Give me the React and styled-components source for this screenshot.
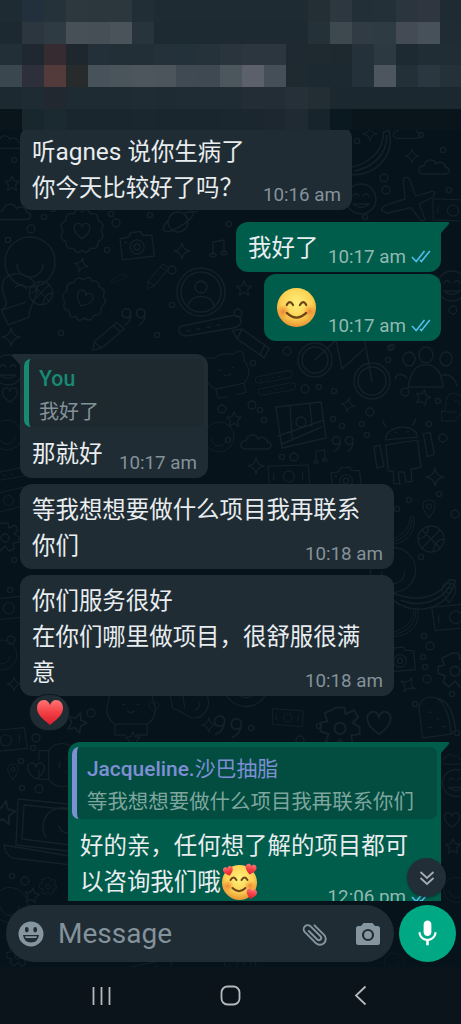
import React from 'react'
import styled, { createGlobalStyle } from 'styled-components';
import { MdMic } from 'react-icons/md';

const GlobalStyle = createGlobalStyle`
  * {
    box-sizing: border-box;
  }
  body {
    margin: 0;
    background: #07131a;
    font-family: Roboto, "Noto Sans CJK SC", sans-serif;
  }
`;
const Screen = styled.div`
  position: relative;
  display: flex;
  flex-direction: column;
  width: 461px;
  height: 1024px;
  overflow: hidden;
  background: #07131a;
`;
const Wallpaper = styled.svg`
  position: absolute;
  left: 0;
  top: 0;
  fill: none;
  stroke: #132128;
  stroke-width: 1.4;
  stroke-linecap: round;
  stroke-linejoin: round;
`;
const Header = styled.div`
  position: relative;
  flex: none;
  display: grid;
  grid-template-columns: repeat(21, 22px);
  grid-template-rows: 22px 22px 21px 22px 22px 21px;
  height: 130px;
`;
const Block = styled.div`
  background: ${(props) => props.$color};
`;
const Chat = styled.div`
  position: relative;
  flex: none;
  display: flex;
  flex-direction: column;
  height: 771px;
  padding: 0 20px;
  overflow: hidden;
`;
const Bubble = styled.div`
  position: relative;
  flex: none;
  display: flex;
  flex-direction: column;
  align-self: ${(props) => (props.$out ? "flex-end" : "flex-start")};
  width: ${(props) => props.$width}px;
  height: ${(props) => props.$height}px;
  margin-top: ${(props) => props.$gap}px;
  padding: ${(props) => (props.$quoted ? "5px 4px" : "7.5px 12px")};
  border-radius: 12px;
  border-top-right-radius: ${(props) => (props.$out && props.$tail ? 0 : 12)}px;
  border-top-left-radius: ${(props) => (!props.$out && props.$tail ? 0 : 12)}px;
  background: ${(props) => (props.$out ? "#005c4b" : "#1f2c34")};
  color: #e9edef;
`;
const Tail = styled.svg`
  position: absolute;
  top: 0;
  left: ${(props) => (props.$out ? "auto" : "-9px")};
  right: ${(props) => (props.$out ? "-9px" : "auto")};
  transform: ${(props) => (props.$out ? "none" : "scaleX(-1)")};
  fill: ${(props) => (props.$out ? "#005c4b" : "#1f2c34")};
`;
const Line = styled.div`
  display: flex;
  align-items: center;
  height: 36px;
  padding-left: ${(props) => (props.$quoted ? 8 : 0)}px;
  font-size: 23.45px;
  line-height: 36px;
  white-space: pre;
`;
const Latin = styled.span`
  font-size: 24.4px;
`;
const BigEmoji = styled.div`
  display: flex;
  padding-top: 5px;
`;
const Stamp = styled.div`
  position: absolute;
  right: ${(props) => (props.$out ? 10 : 11)}px;
  bottom: ${(props) => props.$bottom}px;
  display: flex;
  align-items: center;
  gap: 5px;
  font-size: 18.8px;
  line-height: 22px;
  white-space: nowrap;
  color: ${(props) => (props.$out ? "#91b9b0" : "#84929a")};
`;
const Quote = styled.div`
  display: flex;
  flex-direction: column;
  height: ${(props) => (props.$out ? 72 : 68)}px;
  margin-bottom: 9px;
  padding-left: 10px;
  border-left: 5px solid ${(props) => props.$accent};
  border-radius: 7px;
  background: ${(props) => (props.$out ? "#024d40" : "#1d282f")};
  white-space: nowrap;
`;
const QuoteName = styled.div`
  margin-top: ${(props) => (props.$out ? 6 : 4)}px;
  font-size: ${(props) => (props.$out ? 20.9 : 21.3)}px;
  font-weight: 500;
  line-height: 32px;
  color: ${(props) => props.$accent};
  & span {
    font-weight: 400;
  }
`;
const QuoteText = styled.div`
  font-size: ${(props) => (props.$out ? 20.45 : 20)}px;
  line-height: 34px;
  color: ${(props) => (props.$out ? "#7fa69e" : "#84929a")};
`;
const Reaction = styled.div`
  position: absolute;
  left: 9px;
  bottom: -35px;
  display: flex;
  align-items: center;
  justify-content: center;
  width: 41px;
  height: 37px;
  border: 1px solid #0b171e;
  border-radius: 19px;
  background: #1f2c34;
`;
const ScrollButton = styled.div`
  position: absolute;
  left: 407px;
  top: 858px;
  display: flex;
  align-items: center;
  justify-content: center;
  width: 39px;
  height: 39px;
  border-radius: 50%;
  background: #222e37;
  box-shadow: 0 1px 2px rgba(0, 0, 0, 0.35);
`;
const Composer = styled.div`
  position: relative;
  flex: none;
  display: flex;
  gap: 5px;
  height: 66px;
  padding: 4px 5px 0 6px;
`;
const InputBox = styled.div`
  display: flex;
  align-items: center;
  width: 388px;
  height: 57px;
  padding: 0 13px 0 12px;
  border-radius: 29px;
  background: #1f2c34;
`;
const Placeholder = styled.div`
  flex: 1;
  margin-left: 14px;
  font-size: 28px;
  color: #84929b;
`;
const CameraIcon = styled.svg`
  margin-left: 26px;
`;
const MicButton = styled.div`
  display: flex;
  align-items: center;
  justify-content: center;
  width: 57px;
  height: 57px;
  border-radius: 50%;
  background: #00a884;
  color: white;
`;
const NavBar = styled.div`
  position: relative;
  flex: none;
  display: flex;
  justify-content: space-between;
  align-items: center;
  height: 57px;
  padding: 0 94px 0 91px;
  background: #0b141b;
  & svg:nth-child(2) {
    margin-right: 5px;
  }
`;

// one row per strip of the blurred header, 21 blocks each
const blocks = [
  "1f2b33 222f3d 25323a 2c373e 2b363d 2b363d 212e35 1f2b33 1f2b33 1f2b33 1f2b33 1f2b33 1f2b33 1f2b33 232e35 2c373f 232f37 243037 2b353e 30363f 1f2b32",
  "1d2930 2c363e 2e3b42 475057 454f55 4a5359 27343b 1e2a31 1e2a31 1e2a31 1e2a31 1e2a31 1e2a31 1e2a31 253138 3e484f 303b43 2f3b42 444b54 465159 202c34",
  "232f37 1f2830 352b31 1e272d 23303a 222f37 222f37 25313a 23323a 263239 29343c 2b363e 2b363f 1e2931 1e2930 1d282f 25313a 2d3941 1e2a32 202d35 202d35",
  "3b474f 2d2f3b 533a3b 272b2c 47525a 4a545b 4e565d 4c555c 3f4a52 3e4952 4c565d 5b606b 454f58 1e2930 1c2930 1d2931 25313a 4d565f 243038 2b3740 243139",
  "1c2930 1f2b32 22282f 1f2b33 1f2b33 1f2b32 202c34 1f2b33 202c34 202c34 202c34 222d35 222d35 253038 222d34 1c2830 1b2830 1b2830 1b2830 1b2830 1b2830",
  "09151b 18262e 1b2930 1a262e 1a262e 1a262e 1b272f 1a262e 1a262e 1a262e 1b272f 1b272f 1c2730 202a33 18242c 0a1820 09151b 09151b 09151b 09151b 09151b",
];

const doodles = {
  star: "M0-8L2.4-2.6L8-2L4 2L5 8L0 5L-5 8L-4 2L-8-2L-2.4-2.6Z",
  spark: "M0-9Q1-1 9 0Q1 1 0 9Q-1 1-9 0Q-1-1 0-9Z",
  heart: "M0 8C-12 0-9-8-4-8Q-1-8 0-4Q1-8 4-8C9-8 12 0 0 8Z",
  cloud: "M-10 6C-18 6-16-3-10-2C-9-9 0-10 2-4C6-8 12-4 11-1C17 0 16 6 10 6Z",
  camera: "M-16-9L-7-10L-5-14L5-14L7-10L16-9L16 12L-16 12ZM-7 1A7 7 0 1 0 7 1A7 7 0 1 0-7 1M-3 1A3 3 0 1 0 3 1A3 3 0 1 0-3 1M-12-5H-10",
  person: "M-24 0A24 24 0 1 0 24 0A24 24 0 1 0-24 0M-20 0A20 20 0 1 0 20 0A20 20 0 1 0-20 0M-6-5A6 6 0 1 0 6-5A6 6 0 1 0-6-5M-13 15C-13 1 13 1 13 15",
  flower: "M0-20Q5-26 9-18Q17-20 17-11Q25-8 20 0Q25 8 17 11Q17 20 9 18Q5 26 0 20Q-5 26-9 18Q-17 20-17 11Q-25 8-20 0Q-25-8-17-11Q-17-20-9-18Q-5-26 0-20ZM0 8C-12 0-9-8-4-8Q-1-8 0-4Q1-8 4-8C9-8 12 0 0 8Z",
  planet: "M-10 0A10 10 0 1 0 10 0A10 10 0 1 0-10 0M-9-4C-22 4-16 10 0 5C18 0 22-8 9-7",
  ball: "M-13 0A13 13 0 1 0 13 0A13 13 0 1 0-13 0M-9-9L9 9M9-9L-9 9M-13 0Q-4 0-2-13M13 0Q4 0 2 13",
  pin: "M0 12C-12-2-8-10 0-10C8-10 12-2 0 12ZM-3-2A3 3 0 1 0 3-2A3 3 0 1 0-3-2",
  plane: "M-28 12Q-28 7-16 4L-3 0L-5-20Q-2-26 2-20L8-3L25-8Q31-8 26-2L12 5L18 22L14 23L3 9L-22 15Z",
  banana: "M-20 15C0 12 14 0 14-18L19-20C25 5 5 24-20 20ZM-12 17C5 14 17 2 17-15",
  note: "M-5 6V-7L6-9V4M-8 6A3 2 0 1 0-2 6A3 2 0 1 0-8 6M3 4A3 2 0 1 0 9 4A3 2 0 1 0 3 4",
  quotes: "M-4-1A4 4 0 1 1-4-4Q-3 5-9 8M9-1A4 4 0 1 1 9-4Q10 5 4 8",
  pencil: "M-20 9L-16 0L14-14L20-5L-10 9ZM-16 0L-10 9M9-12L15-3",
  tube: "M-30 8Q-33 1-28 0L20-10Q31-12 31-5Q31 1 23 2L-24 10ZM-23 5H-20M-13 3H-10M-3 1H0M7-1H10",
  face: "M-15 0A15 15 0 1 0 15 0A15 15 0 1 0-15 0M-8-3Q-5-8-2-3M2-3Q5-8 8-3M-8 5Q0 12 8 5Z",
  bag: "M-24-17L21-22L26 14L-18 24ZM-22 12L24-4M-18 20L22 3M-10-18L-8 14M10-20L12 2M-4-2A5 5 0 1 0 6-2A5 5 0 1 0-4-2",
  robot: "M-16-9C-16-24 16-25 16-10ZM-15-22L-18-28M12-22L15-28M-6-16H-5M6-16H7M-16-4L16-7L18 20L8 22V34L2 34L1 24L-5 24L-4 36L-10 35L-10 23L-15 22ZM-28-3L-22-4L-19 17L-26 19ZM22-13L29-14L32 8L25 10Z",
  glove: "M-14-24C0-32 18-22 16-6C14 4 6 6 4 18L-18 22L-22 6C-8 0-24-8-14-24ZM-20 6L3 3M-4-14Q4-18 6-10",
  cat: "M-24-10Q-30-28-12-20Q0-26 12-20Q28-28 24-10Q32 8 18 18H-18Q-32 8-24-10ZM-9-4H-7M7-4H9M-4 3Q0 7 4 3M-18 18V30H-6M18 18V30H6",
  bike: "M-34 7A17 17 0 1 0 0 7A17 17 0 1 0-34 7M-30 7A13 13 0 1 0-4 7A13 13 0 1 0-30 7M22 28A18 18 0 1 0 58 28A18 18 0 1 0 22 28M26 28A14 14 0 1 0 54 28A14 14 0 1 0 26 28M-17 7L4-13L10 16L32-4M4-13L32-16L40 28",
  crowd: "M-17 12Q-13-12 2-10Q16-10 18 12ZM-6-20A7 8 0 1 0 8-20A7 8 0 1 0-6-20M-22-16A6 7 0 1 0-10-16A6 7 0 1 0-22-16M15-16A6 7 0 1 0 27-16A6 7 0 1 0 15-16M-18 3Q-27-5-30 4M18 0Q28-2 32 11",
  laptop: "M-32-30L38-23L35 24L-34 16ZM-26-24L32-18L29 17L-28 10ZM-46 16L50 32Q48 38 40 38L-38 29Q-45 25-46 16M-4 8A19 19 0 1 1 31-2M9-3Q11 4 18 4",
  ice: "M-12 22L-16-10Q-12-24 2-20Q15-14 18 18ZM2-20Q19-18 23 14L18 18M-5-5H-3M3 2H5M-5 11H-3M9 10H11",
  money: "M-26-13L24-18L28 8L-22 13ZM-6-2A7 7 0 1 0 8-2A7 7 0 1 0-6-2M-18-4V4M18-9V0",
  ring: "M-25 0A25 25 0 1 0 25 0A25 25 0 1 0-25 0M-13 2A13 13 0 1 0 13 2",
  gear: "M-3-14H3L4-9L10-12L13-7L9-3L14 0V5L8 6L9 12L4 14L0 9L-5 14L-10 10L-8 5L-14 3V-3L-9-4L-11-10L-6-12ZM-4 1A4 4 0 1 0 4 1A4 4 0 1 0-4 1",
};

// [shape, x, y, rotation, scale]
const placed = [
  ["ring", 30, 262, 0, 1], ["flower", 82, 231, 0, 0.95], ["camera", 137, 246, -7, 1], ["planet", 178, 222, -14, 1],
  ["spark", 182, 251, 0, 0.9], ["spark", 81, 265, 15, 0.8], ["person", 201, 292, 0, 1], ["flower", 84, 299, 25, 0.95],
  ["glove", 22, 300, -10, 1], ["ball", 41, 293, 0, 0.9], ["pencil", 108, 338, -15, 0.9], ["tube", 210, 326, 0, 1],
  ["pencil", 158, 277, -25, 0.7], ["pencil", 119, 279, 0, 0.4],
  ["quotes", 135, 316, 0, 1.1], ["star", 244, 288, 0, 0.9], ["spark", 11, 337, 0, 1], ["cloud", 14, 213, 0, 1.1],
  ["note", 218, 249, 0, 1], ["banana", 368, 152, 0, 1.1], ["spark", 370, 134, 0, 0.8], ["spark", 412, 156, 0, 0.8],
  ["cloud", 434, 168, 0, 1], ["face", 361, 199, 0, 1], ["plane", 408, 199, 0, 0.95], ["cloud", 407, 133, 0, 0.9],
  ["money", 452, 212, 8, 0.8], ["face", 452, 286, 0, 1], ["pencil", 250, 343, 60, 1], ["cat", 227, 372, -12, 0.8],
  ["tube", 274, 377, 0, 0.6], ["tube", 277, 389, 0, 0.6], ["bike", 332, 353, 0, 1], ["crowd", 425, 375, 0, 1],
  ["star", 423, 397, 15, 0.9], ["bag", 300, 424, 0, 1], ["spark", 348, 405, 10, 0.8], ["quotes", 344, 443, 0, 1],
  ["robot", 402, 448, -3, 1], ["star", 234, 419, 0, 0.9], ["cloud", 256, 443, 0, 1], ["spark", 256, 466, 0, 0.9],
  ["note", 320, 457, 0, 0.8], ["camera", 346, 480, -5, 0.9], ["money", 288, 478, 4, 0.8], ["spark", 435, 477, 0, 1],
  ["glove", 455, 410, 10, 0.6], ["ring", 219, 437, 0, 0.6], ["face", 8, 370, 0, 1], ["ring", 7, 435, 0, 0.6],
  ["heart", 10, 395, 0, 0.9], ["tube", 6, 475, 0, 0.7], ["money", 8, 502, -8, 0.7], ["gear", 5, 537, 0, 1],
  ["pin", 429, 508, 0, 0.8], ["ball", 431, 539, 0, 1], ["banana", 400, 530, 0, 0.7], ["ring", 393, 570, 0, 0.9],
  ["banana", 424, 590, 30, 1.2], ["pin", 449, 592, 0, 0.9], ["banana", 404, 622, 0, 0.7], ["money", 455, 619, 0, 0.9],
  ["camera", 400, 660, -5, 0.9], ["spark", 408, 685, 30, 0.9], ["gear", 455, 670, 0, 1.2], ["ice", 434, 717, 0, 0.95],
  ["money", 8, 610, 0, 0.8], ["ring", 2, 655, 0, 0.6], ["spark", 14, 684, 0, 0.8], ["star", 77, 722, 20, 1.2],
  ["cat", 131, 708, 0, 0.9], ["glove", 187, 705, 90, 0.8], ["heart", 154, 707, 0, 0.6], ["spark", 209, 725, 0, 0.8],
  ["quotes", 229, 726, 10, 1.3], ["ring", 246, 684, 0, 0.9], ["money", 287, 719, 10, 0.6], ["gear", 340, 727, 0, 1.4],
  ["heart", 379, 723, 0, 1.4], ["star", 133, 739, 0, 0.9], ["money", 5, 742, 0, 0.8], ["heart", 36, 771, 0, 1],
  ["pin", 13, 771, 0, 0.7], ["cat", 63, 765, 90, 0.8], ["laptop", 50, 829, 0, 1], ["star", 4, 812, 10, 1.4],
  ["ring", 10, 905, 0, 0.7], ["star", 32, 895, 10, 0.9], ["gear", 48, 886, 0, 0.6], ["face", 456, 783, 0, 0.9],
  ["cloud", 452, 760, 0, 0.7], ["heart", 452, 820, 0, 0.9], ["star", 453, 846, 0, 0.9], ["ring", 456, 890, 0, 0.5],
  ["ring", 394, 963, 0, 0.4], ["gear", 18, 955, 0, 0.8], ["tube", 150, 967, 0, 0.7], ["money", 240, 967, 0, 0.6],
  ["star", 12, 183, 0, 0.9], ["cloud", 8, 143, 0, 0.9],
];
const dots = [
  [31, 229], [44, 217], [53, 209], [116, 223], [150, 215], [107, 250], [195, 208], [229, 224], [111, 214], [172, 270],
  [61, 333], [157, 335], [238, 313], [172, 305], [357, 141], [384, 178], [421, 135], [443, 150], [386, 190], [449, 190],
  [253, 363], [287, 351], [388, 360], [392, 347], [305, 389], [319, 387], [334, 391], [252, 405], [260, 410], [264, 420],
  [222, 409], [333, 419], [342, 426], [370, 412], [362, 424], [367, 435], [405, 392], [438, 401], [429, 424], [443, 438],
  [228, 440], [282, 457], [294, 457], [397, 509], [439, 494], [455, 514], [421, 557], [424, 636], [430, 646], [423, 657],
  [425, 667], [427, 679], [415, 704], [452, 694], [91, 713], [251, 728], [319, 726], [36, 738], [33, 748],
  [21, 761], [39, 789], [22, 788], [12, 876], [25, 881], [10, 590], [14, 560], [11, 640], [457, 733], [409, 500],
  [300, 740], [14, 160], [365, 217], [453, 310], [390, 348], [8, 240],
];

const gradients = (
  <defs>
    <radialGradient id="face" cx="0.5" cy="0.38" r="0.65">
      <stop offset="0" stopColor="#fff07a" />
      <stop offset="0.6" stopColor="#fbd153" />
      <stop offset="1" stopColor="#e58c2d" />
    </radialGradient>
    <radialGradient id="blush">
      <stop offset="0" stopColor="#ee6a30" stopOpacity="0.75" />
      <stop offset="1" stopColor="#ee8a30" stopOpacity="0" />
    </radialGradient>
    <linearGradient id="heart" x1="0" y1="0" x2="0" y2="1">
      <stop offset="0" stopColor="#ff7474" />
      <stop offset="0.5" stopColor="#f23f45" />
      <stop offset="1" stopColor="#d91f2c" />
    </linearGradient>
  </defs>
)
const HEART = "M14 25C8 20 1 15 1 8C1 3 4 0 8 0C11 0 13 2 14 5C15 2 17 0 20 0C24 0 27 3 27 8C27 15 20 20 14 25Z"

const BlushEmoji = () => (
  <svg width="41" height="41" viewBox="0 0 42 42">
    {gradients}
    <circle cx="21" cy="21" r="20" fill="url(#face)" />
    <circle cx="7.5" cy="25" r="7" fill="url(#blush)" />
    <circle cx="34.5" cy="25" r="7" fill="url(#blush)" />
    <g fill="none" stroke="#6d431c" strokeWidth="2.2" strokeLinecap="round">
      <path d="M11 18.5Q14 12.5 17.5 18.5M24.5 18.5Q28 12.5 31 18.5" />
      <path d="M11 26.5Q21 36 31 26.5" />
    </g>
  </svg>
)
const HeartsEmoji = () => (
  <svg width="38" height="38" viewBox="0 0 38 38">
    <circle cx="18.5" cy="19.5" r="17.5" fill="url(#face)" />
    <circle cx="7" cy="23" r="6" fill="url(#blush)" />
    <circle cx="29" cy="23" r="6" fill="url(#blush)" />
    <g fill="none" stroke="#6d431c" strokeWidth="2" strokeLinecap="round">
      <path d="M9.5 17Q12.5 12 15.5 17M20.5 17Q23.5 12 26.5 17" />
      <path d="M11.5 25Q18 31.5 24.5 25" />
    </g>
    <g fill="url(#heart)">
      <path d={HEART} transform="translate(1 5) rotate(-15) scale(0.38)" />
      <path d={HEART} transform="translate(25 0) rotate(12) scale(0.42)" />
      <path d={HEART} transform="translate(26 25) rotate(12) scale(0.4)" />
    </g>
  </svg>
)
const Ticks = () => (
  <svg width="20" height="14" viewBox="0 0 20 14" fill="none" stroke="#53bdeb" strokeWidth="1.6">
    <path d="M1 7L5.2 11.5L13.5 1M9 10L10.4 11.5L18.8 1" />
  </svg>
)

const Message = ({ out, tail, quote, lines, time, stampBottom = 4, children, ...box }) => (
  <Bubble $out={out} $tail={tail} $quoted={!!quote} $width={box.width} $height={box.height} $gap={box.gap}>
    {tail && (
      <Tail $out={out} width="10" height="13" viewBox="0 0 10 13">
        <path d="M0 0H8Q10 .5 9 2L1 11V13H0Z" />
      </Tail>
    )}
    {quote && (
      <Quote $out={out} $accent={quote.accent}>
        <QuoteName $out={out} $accent={quote.accent}>{quote.name}</QuoteName>
        <QuoteText $out={out}>{quote.text}</QuoteText>
      </Quote>
    )}
    {lines.map((line, i) => <Line key={i} $quoted={!!quote}>{line}</Line>)}
    <Stamp $out={out} $bottom={stampBottom}>{time}{out && <Ticks />}</Stamp>
    {children}
  </Bubble>
)

const App = () => {
    return (
        <Screen>
            <GlobalStyle />
            <Wallpaper width="461" height="967" viewBox="0 0 461 967">
                {placed.map(([name, x, y, angle, scale], i) => (
                    <path key={i} d={doodles[name]} transform={`translate(${x} ${y}) rotate(${angle}) scale(${scale})`} />
                ))}
                {dots.map(([x, y], i) => <circle key={i} cx={x} cy={y} r={i % 3 === 0 ? 4 : 2.6} />)}
            </Wallpaper>
            <Header>
                {blocks.map((row, r) => row.split(" ").map((color, c) => <Block key={`${r}-${c}`} $color={`#${color}`} />))}
            </Header>
            <Chat>
                <Message
                    width={332} height={84} gap={-4}
                    lines={[<React.Fragment key="a">听<Latin>agnes </Latin>说你生病了</React.Fragment>, "你今天比较好了吗？"]}
                    time="10:16 am"
                />
                <Message out tail width={205} height={50} gap={12} lines={["我好了"]} time="10:17 am" />
                <Message out width={177} height={67} gap={2} lines={[]} time="10:17 am">
                    <BigEmoji><BlushEmoji /></BigEmoji>
                </Message>
                <Message
                    tail width={188} height={124} gap={13}
                    quote={{ name: "You", text: "我好了", accent: "#168a72" }}
                    lines={["那就好"]} time="10:17 am"
                />
                <Message width={374} height={85} gap={6} lines={["等我想想要做什么项目我再联系", "你们"]} time="10:18 am" />
                <Message width={374} height={121} gap={6} lines={["你们服务很好", "在你们哪里做项目，很舒服很满", "意"]} time="10:18 am">
                    <Reaction>
                        <svg width="28" height="25" viewBox="0 0 28 25"><path d={HEART} fill="url(#heart)" /></svg>
                    </Reaction>
                </Message>
                <Message
                    out tail width={373} height={172} gap={46} stampBottom={6}
                    quote={{ name: <>Jacqueline.<span>沙巴抽脂</span></>, text: "等我想想要做什么项目我再联系你们", accent: "#7f8fd6" }}
                    lines={["好的亲，任何想了解的项目都可", <React.Fragment key="t">以咨询我们哦<HeartsEmoji /></React.Fragment>]}
                    time="12:06 pm"
                />
            </Chat>
            <Composer>
                <InputBox>
                    <svg width="26" height="26" viewBox="0 0 26 26">
                        <circle cx="13" cy="13" r="12.5" fill="#8696a0" />
                        <g fill="#1f2c34">
                            <rect x="7" y="6" width="3.6" height="5.4" rx="1.8" />
                            <rect x="15.4" y="6" width="3.6" height="5.4" rx="1.8" />
                            <path d="M5 14H21Q20 21.5 13 21.5Q6 21.5 5 14Z" />
                        </g>
                        <path d="M7 15.2H19L18.3 17H7.7Z" fill="#8696a0" />
                    </svg>
                    <Placeholder>Message</Placeholder>
                    <svg width="28" height="28" viewBox="0 0 28 28" fill="none" stroke="#8696a0" strokeWidth="1.9" strokeLinecap="round">
                        <g transform="rotate(-45 14 14)">
                            <path d="M19.8 7.5V21A5.8 5.8 0 0 1 8.2 21V5.5A4 4 0 0 1 16.3 5.5V19.5A2.3 2.3 0 0 1 11.7 19.5V7.5" />
                        </g>
                    </svg>
                    <CameraIcon width="26" height="24" viewBox="0 0 26 24">
                        <path d="M8.5 1H17.5L20 4H22.5Q25 4 25 6.5V20.5Q25 23 22.5 23H3.5Q1 23 1 20.5V6.5Q1 4 3.5 4H6Z" fill="#8696a0" />
                        <circle cx="13" cy="13" r="5" fill="none" stroke="#1f2c34" strokeWidth="2.2" />
                    </CameraIcon>
                </InputBox>
                <MicButton><MdMic size={31} /></MicButton>
            </Composer>
            <NavBar>
                <svg width="21" height="20" viewBox="0 0 21 20" stroke="#b5b9bd" strokeWidth="1.8">
                    <path d="M2.5 1V19M10.5 1V19M18.5 1V19" />
                </svg>
                <svg width="21" height="21" viewBox="0 0 21 21" fill="none" stroke="#b5b9bd" strokeWidth="1.8">
                    <rect x="1.5" y="1.5" width="18" height="18" rx="6" />
                </svg>
                <svg width="13" height="21" viewBox="0 0 13 21" fill="none" stroke="#b5b9bd" strokeWidth="1.8">
                    <path d="M11.5 1.5L2 10.5L11.5 19.5" />
                </svg>
            </NavBar>
            <ScrollButton>
                <svg width="16" height="16" viewBox="0 0 16 16" fill="none" stroke="#a3adb3" strokeWidth="1.8">
                    <path d="M1.5 2L8 8L14.5 2M1.5 8L8 14L14.5 8" />
                </svg>
            </ScrollButton>
        </Screen>
    )
}

export default App
